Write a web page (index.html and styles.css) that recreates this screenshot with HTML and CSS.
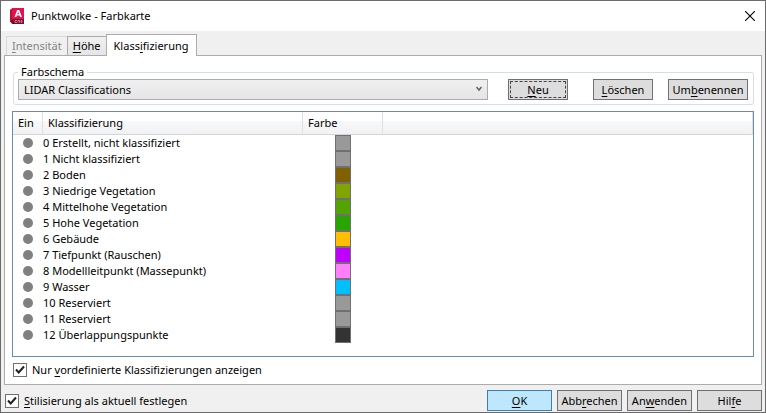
FILE: index.html
```html
<!DOCTYPE html>
<html lang="de">

<head>
    <meta charset="UTF-8">
    <meta name="viewport" content="width=device-width, initial-scale=1.0">
    <title>Punktwolke - Farbkarte</title>
    <link rel="stylesheet" href="styles.css">
</head>

<body>
    <div class="dialog">
        <header class="titlebar">
            <svg class="logo" width="16" height="16" viewBox="0 0 16 16">
                <path d="M1 1 3 0v12l-1 3-2-1V2z" fill="#b5123c" />
                <path d="M2 0h12v11H2z" fill="#e51050" />
                <path d="M2 11h12v5H2l-1-2z" fill="#7c0b2b" />
                <path d="M7.2 2h2L12 9h-1.900l-.5-1.400H6.800L6.300 9H4.500zM8.200 4 7.300 6.300h1.800z" fill="#fff" />
                <path d="M5 12.500h2M5 12.500v2h2M8 14.500v-2h1.500v2M11 12.500v2h1v-2z" fill="none" stroke="#d9a6b4" stroke-width=".7" />
            </svg>
            <h1>Punktwolke - Farbkarte</h1>
            <button class="close" aria-label="Schließen">
                <svg width="10" height="10" viewBox="0 0 10 10">
                    <path d="M0 0 10 10M10 0 0 10" stroke="#000" stroke-width="1.100" />
                </svg>
            </button>
        </header>

        <div class="tabs" role="tablist">
            <button class="tab" role="tab" disabled><u>I</u>ntensität</button>
            <button class="tab" role="tab"><u>H</u>öhe</button>
            <button class="tab current" role="tab" aria-selected="true">Klass<u>i</u>fizierung</button>
        </div>

        <main class="panel">
            <fieldset class="scheme">
                <legend>Farbschema</legend>
                <div class="scheme-row">
                    <div class="combo">
                        <select aria-label="Farbschema">
                            <option>LIDAR Classifications</option>
                        </select>
                        <svg class="arrow" width="6" height="6" viewBox="0 0 6 6">
                            <path d="M.5 1 3 4 5.500 1" fill="none" stroke="#606060" stroke-width="1.500" />
                        </svg>
                    </div>
                    <button class="btn focus"><u>N</u>eu</button>
                    <button class="btn delete"><u>L</u>öschen</button>
                    <button class="btn rename">Um<u>b</u>enennen</button>
                </div>
            </fieldset>

            <div class="list">
                <table>
                    <thead>
                        <tr>
                            <th class="col-on">Ein</th>
                            <th class="col-name">Klassifizierung</th>
                            <th class="col-color">Farbe</th>
                            <th class="col-rest"></th>
                        </tr>
                    </thead>
                    <tbody>
                        <tr><td><i class="dot"></i></td><td>0 Erstellt, nicht klassifiziert</td><td><i class="swatch gray"></i></td><td></td></tr>
                        <tr><td><i class="dot"></i></td><td>1 Nicht klassifiziert</td><td><i class="swatch gray"></i></td><td></td></tr>
                        <tr><td><i class="dot"></i></td><td>2 Boden</td><td><i class="swatch brown"></i></td><td></td></tr>
                        <tr><td><i class="dot"></i></td><td>3 Niedrige Vegetation</td><td><i class="swatch olive"></i></td><td></td></tr>
                        <tr><td><i class="dot"></i></td><td>4 Mittelhohe Vegetation</td><td><i class="swatch leaf"></i></td><td></td></tr>
                        <tr><td><i class="dot"></i></td><td>5 Hohe Vegetation</td><td><i class="swatch green"></i></td><td></td></tr>
                        <tr><td><i class="dot"></i></td><td>6 Gebäude</td><td><i class="swatch orange"></i></td><td></td></tr>
                        <tr><td><i class="dot"></i></td><td>7 Tiefpunkt (Rauschen)</td><td><i class="swatch purple"></i></td><td></td></tr>
                        <tr><td><i class="dot"></i></td><td>8 Modellleitpunkt (Massepunkt)</td><td><i class="swatch pink"></i></td><td></td></tr>
                        <tr><td><i class="dot"></i></td><td>9 Wasser</td><td><i class="swatch blue"></i></td><td></td></tr>
                        <tr><td><i class="dot"></i></td><td>10 Reserviert</td><td><i class="swatch gray"></i></td><td></td></tr>
                        <tr><td><i class="dot"></i></td><td>11 Reserviert</td><td><i class="swatch gray"></i></td><td></td></tr>
                        <tr><td><i class="dot"></i></td><td>12 Überlappungspunkte</td><td><i class="swatch dark"></i></td><td></td></tr>
                    </tbody>
                </table>
            </div>

            <label class="check">
                <span class="box">
                    <input type="checkbox" checked>
                    <svg width="14" height="14" viewBox="0 0 14 14"><path d="M3 6.500 5.700 9.500 11 3.500" /></svg>
                </span>
                <span>Nur <u>v</u>ordefinierte Klassifizierungen anzeigen</span>
            </label>
        </main>

        <footer class="footer">
            <label class="check">
                <span class="box">
                    <input type="checkbox" checked>
                    <svg width="14" height="14" viewBox="0 0 14 14"><path d="M3 6.500 5.700 9.500 11 3.500" /></svg>
                </span>
                <span><u>S</u>tilisierung als aktuell festlegen</span>
            </label>
            <div class="actions">
                <button class="btn default"><u>O</u>K</button>
                <button class="btn">Abb<u>r</u>echen</button>
                <button class="btn">An<u>w</u>enden</button>
                <button class="btn">Hil<u>f</u>e</button>
            </div>
        </footer>
    </div>
</body>

</html>
```
FILE: styles.css
```css
* {
    margin: 0;
    padding: 0;
    box-sizing: border-box;
}

body,
button,
select {
    font: 11px/16px "Noto Sans", "Open Sans", sans-serif;
    color: #000;
}

u {
    text-underline-offset: 2px;
}

.dialog {
    display: flex;
    flex-direction: column;
    min-height: 100vh;
    border: 1px solid #6b696b;
    background-color: #f0f0f0;
}

/* title bar */
.titlebar {
    display: flex;
    align-items: center;
    height: 30px;
    padding: 0 10px 0 9px;
    background-color: #fff;
}

.titlebar h1 {
    flex: 1;
    margin-left: 5px;
    font-size: 11px;
    font-weight: normal;
}

.close {
    display: flex;
    border: 0;
    background: none;
}

/* tabs */
.tabs {
    display: flex;
    align-items: flex-end;
    height: 24px;
    padding: 0 5px;
}

.tab {
    height: 19px;
    padding: 0 5px;
    border: 1px solid #acacac;
    border-bottom: 0;
    background-color: #f0f0f0;
    background-image: linear-gradient(#f0f0f0, #e5e5e5);
}

.tab:disabled {
    border-color: #d9d9d9;
    border-right: 0;
    background: #f0f0f0;
    color: #838383;
}

.tab.current {
    position: relative;
    height: 22px;
    margin: 0 0 -1px -1px;
    padding: 0 7px;
    background: #fff;
}

/* content */
.panel {
    flex: 1;
    margin: 0 3px;
    padding: 9px 7px 6px;
    border: 1px solid #acacac;
    background-color: #fff;
}

.scheme {
    min-width: 0;
    margin: 0 0 6px 1px;
    padding: 0 5px 4px 4px;
    border: 1px solid #d5dfe5;
    border-radius: 3px;
}

.scheme legend {
    padding: 0 3px;
    line-height: 14px;
}

.scheme-row {
    display: flex;
}

.combo {
    position: relative;
    flex: 1;
    margin-right: 20px;
}

.combo select {
    display: block;
    appearance: none;
    width: 100%;
    height: 21px;
    padding: 0 20px 0 5px;
    border: 1px solid #acacac;
    border-radius: 0;
    background: linear-gradient(#f0f0f0, #e5e5e5);
}

.arrow {
    position: absolute;
    top: 7px;
    right: 6px;
    pointer-events: none;
}

.btn {
    width: 60px;
    height: 21px;
    border: 1px solid #707070;
    background-color: #ddd;
}

.btn.focus {
    outline: 1px dashed #444;
    outline-offset: -3px;
}

.btn.delete {
    margin: 0 15px 0 25px;
}

.btn.rename {
    width: 80px;
}

/* list */
.list {
    margin-bottom: 5px;
    padding-bottom: 13px;
    border: 1px solid #6a8cb0;
}

table {
    width: 100%;
    table-layout: fixed;
    border-collapse: separate;
    border-spacing: 0;
}

th {
    height: 23px;
    padding-left: 5px;
    border-right: 1px solid #dedfe1;
    border-bottom: 1px solid #d5d5d5;
    background: linear-gradient(#fff 40%, #f7f8fa 41%, #f1f2f4);
    font-weight: normal;
    text-align: left;
}

.col-on {
    width: 30px;
}

.col-name {
    width: 260px;
}

.col-color {
    width: 80px;
}

td {
    height: 16px;
    line-height: 16px;
    white-space: nowrap;
}

.dot {
    display: block;
    width: 10px;
    height: 10px;
    margin: 0 auto;
    border-radius: 50%;
    background-color: #808080;
}

.swatch {
    display: block;
    width: 16px;
    height: 16px;
    margin: 0 auto;
    border: 1px solid #707070;
}

.gray { background-color: #999; }
.brown { background-color: #806000; }
.olive { background-color: #80a500; }
.leaf { background-color: #52a500; }
.green { background-color: #29a500; }
.orange { background-color: #ffbf00; }
.purple { background-color: #bf00ff; }
.pink { background-color: #ff7fff; }
.blue { background-color: #00bfff; }
.dark { background-color: #333; }

/* check boxes */
.check {
    display: flex;
    align-items: center;
    gap: 5px;
    width: max-content;
}

.panel .check {
    margin-left: 1px;
}

.box {
    position: relative;
    width: 14px;
    height: 14px;
}

.box input {
    display: block;
    appearance: none;
    width: 14px;
    height: 14px;
    border: 1px solid #707070;
    background-color: #fff;
}

.box svg {
    position: absolute;
    top: 0;
    left: 0;
    fill: none;
    stroke: #212121;
    stroke-width: 2;
    visibility: hidden;
    pointer-events: none;
}

.box input:checked + svg {
    visibility: visible;
}

/* footer */
.footer {
    display: flex;
    align-items: center;
    justify-content: space-between;
    padding: 5px 3px 1px 4px;
}

.actions {
    display: flex;
    gap: 5px;
}

.actions .btn {
    width: 65px;
}

.btn.default {
    border-color: #3c7fb1;
    background-color: #bee6fd;
}
```
